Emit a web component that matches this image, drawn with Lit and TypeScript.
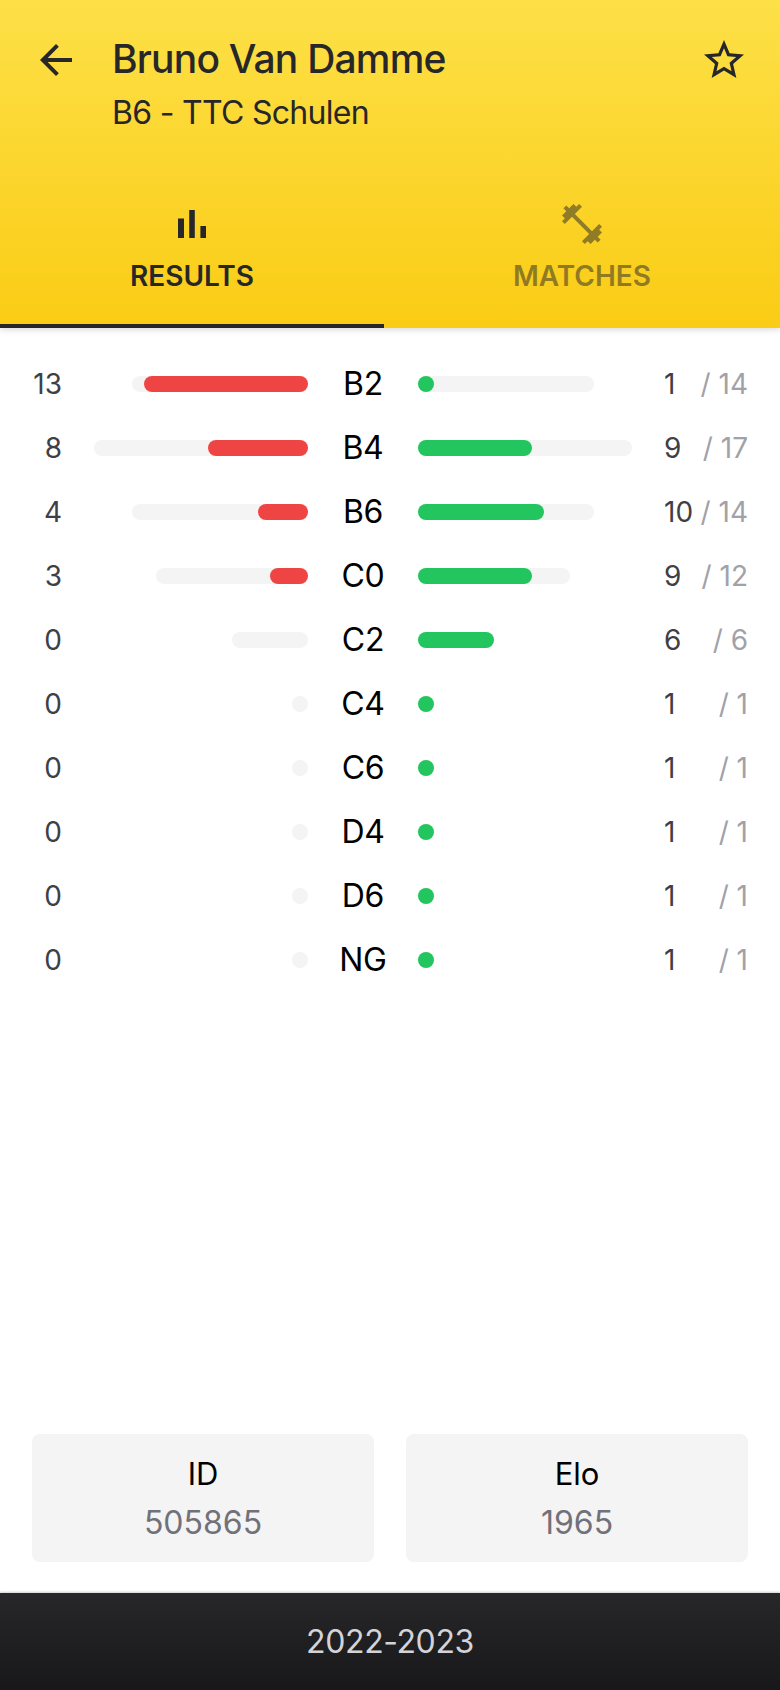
import { LitElement, html, css } from "lit";
import { customElement } from "lit/decorators.js";

const ROWS = [
  { label: "B2", lost: 13, won: 1, total: 14, track: 176, lostW: 164, wonW: 16 },
  { label: "B4", lost: 8, won: 9, total: 17, track: 214, lostW: 100, wonW: 114 },
  { label: "B6", lost: 4, won: 10, total: 14, track: 176, lostW: 50, wonW: 126 },
  { label: "C0", lost: 3, won: 9, total: 12, track: 152, lostW: 38, wonW: 114 },
  { label: "C2", lost: 0, won: 6, total: 6, track: 76, lostW: 0, wonW: 76 },
  { label: "C4", lost: 0, won: 1, total: 1, track: 16, lostW: 0, wonW: 16 },
  { label: "C6", lost: 0, won: 1, total: 1, track: 16, lostW: 0, wonW: 16 },
  { label: "D4", lost: 0, won: 1, total: 1, track: 16, lostW: 0, wonW: 16 },
  { label: "D6", lost: 0, won: 1, total: 1, track: 16, lostW: 0, wonW: 16 },
  { label: "NG", lost: 0, won: 1, total: 1, track: 16, lostW: 0, wonW: 16 },
];

@customElement("app-root")
export class AppRoot extends LitElement {
  static styles = css`
    :host {
      display: flex;
      flex-direction: column;
      min-height: 100vh;
      background: #fff;
      font-family: Inter, "Liberation Sans", sans-serif;
      color: #000;
    }
    svg { display: block; fill: currentColor; }
    .header {
      background: linear-gradient(180deg, #fde047 0%, #facc15 100%);
      color: #27272a;
      box-shadow: 0 2px 6px rgba(0, 0, 0, 0.14);
      position: relative;
      z-index: 1;
    }
    .top {
      display: flex;
      padding: 36px 32px 0;
      height: 200px;
      box-sizing: border-box;
    }
    .titles { flex: 1; margin-left: 32px; }
    .title { font-size: 39px; font-weight: 500; line-height: 48px; letter-spacing: -0.8px; margin-top: -1px; }
    .subtitle { font-size: 32px; line-height: 48px; margin-top: 6px; letter-spacing: -0.7px; }
    .tabs { display: flex; }
    .tab {
      display: flex;
      flex-direction: column;
      align-items: center;
      height: 128px;
      box-sizing: border-box;
      padding-bottom: 4px;
    }
    .tab.results { width: 384px; border-bottom: 4px solid #27272a; padding-bottom: 0; }
    .tab.matches { flex: 1; opacity: 0.5; }
    .tab-label { font-size: 28px; font-weight: 600; line-height: 56px; }
    .main { flex: 1; display: flex; flex-direction: column; padding: 24px 32px 31px; }
    .rows { flex: 1; }
    .row {
      display: grid;
      grid-template-columns: 30px 246px 110px 246px 84px;
      height: 64px;
      align-items: center;
    }
    .count { font-size: 28px; color: #3f3f46; line-height: 40px; }
    .lost { text-align: right; }
    .label { font-size: 32px; letter-spacing: -0.3px; text-align: center; line-height: 40px; }
    .bar-cell { display: flex; }
    .bar-cell.left { justify-content: flex-end; }
    .track { height: 16px; border-radius: 8px; background: #f4f4f5; display: flex; }
    .track.left { justify-content: flex-end; }
    .fill { height: 16px; border-radius: 8px; }
    .fill.red { background: #ef4444; }
    .fill.green { background: #22c55e; }
    .right-nums { display: flex; justify-content: space-between; align-items: center; }
    .total { color: #a1a1aa; font-size: 28px; line-height: 40px; }
    .cards { display: flex; gap: 32px; }
    .card {
      flex: 1;
      height: 128px;
      box-sizing: border-box;
      background: #f4f4f5;
      border-radius: 8px;
      display: flex;
      flex-direction: column;
      align-items: center;
      padding-top: 18px;
    }
    .card-title { font-size: 31px; line-height: 44px; }
    .card-value { font-size: 32px; line-height: 44px; margin-top: 5px; color: #71717a; }
    .footer {
      height: 97px;
      background: linear-gradient(180deg, #27272a 0%, #18181b 100%);
      color: #d4d4d8;
      display: flex;
      align-items: center;
      justify-content: center;
      font-size: 32px;
      letter-spacing: -0.4px;
      box-shadow: 0 -1px 2px rgba(0, 0, 0, 0.2);
    }
  `;

  private icon(d: string) {
    return html`<svg width="48" height="48" viewBox="0 0 24 24"><path d=${d}></path></svg>`;
  }

  render() {
    return html`
      <div class="header">
        <div class="top">
          ${this.icon("M20 11H7.83l5.59-5.59L12 4l-8 8 8 8 1.41-1.41L7.83 13H20v-2z")}
          <div class="titles">
            <div class="title">Bruno Van Damme</div>
            <div class="subtitle">B6 - TTC Schulen</div>
          </div>
          ${this.icon("M22 9.24l-7.19-.62L12 2 9.19 8.63 2 9.24l5.46 4.73L5.82 21 12 17.27 18.18 21l-1.63-7.03L22 9.24zM12 15.4l-3.76 2.27 1-4.28-3.32-2.88 4.38-.38L12 6.1l1.71 4.04 4.38.38-3.32 2.88 1 4.28L12 15.4z")}
        </div>
        <div class="tabs">
          <div class="tab results">
            ${this.icon("M5 9.2h3V19H5zM10.6 5h2.8v14h-2.8zm5.6 8H19v6h-2.8z")}
            <div class="tab-label">RESULTS</div>
          </div>
          <div class="tab matches">
            ${this.icon("M20.57 14.86L22 13.43 20.57 12 17 15.57 8.43 7 12 3.43 10.57 2 9.14 3.43 7.71 2 5.57 4.14 4.14 2.71 2.71 4.14l1.43 1.43L2 7.71l1.43 1.43L2 10.57 3.43 12 7 8.43 15.57 17 12 20.57 13.43 22l1.43-1.43L16.29 22l2.14-2.14 1.43 1.43 1.43-1.43-1.43-1.43L22 16.29z")}
            <div class="tab-label">MATCHES</div>
          </div>
        </div>
      </div>
      <div class="main">
        <div class="rows">
          ${ROWS.map(
            (r) => html`
              <div class="row">
                <div class="count lost">${r.lost}</div>
                <div class="bar-cell left">
                  <div class="track left" style="width:${r.track}px">
                    ${r.lostW ? html`<div class="fill red" style="width:${r.lostW}px"></div>` : ""}
                  </div>
                </div>
                <div class="label">${r.label}</div>
                <div class="bar-cell">
                  <div class="track" style="width:${r.track}px">
                    <div class="fill green" style="width:${r.wonW}px"></div>
                  </div>
                </div>
                <div class="right-nums">
                  <span class="count">${r.won}</span>
                  <span class="total">/ ${r.total}</span>
                </div>
              </div>
            `
          )}
        </div>
        <div class="cards">
          <div class="card"><div class="card-title">ID</div><div class="card-value">505865</div></div>
          <div class="card"><div class="card-title">Elo</div><div class="card-value">1965</div></div>
        </div>
      </div>
      <div class="footer">2022-2023</div>
    `;
  }
}
